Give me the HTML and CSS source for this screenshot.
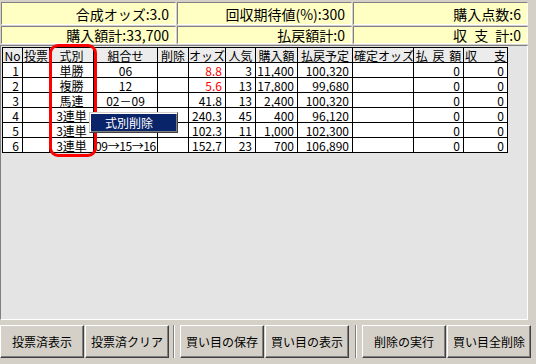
FILE: index.html
```html
<!DOCTYPE html>
<html lang="ja">
<head>
<meta charset="utf-8">
<title>買い目</title>
<link rel="stylesheet" href="styles.css">
</head>
<body>
<div class="summary">
  <div class="panel tall">合成オッズ:3.0</div>
  <div class="panel tall">回収期待値(%):300</div>
  <div class="panel tall">購入点数:6</div>
  <div class="panel">購入額計:33,700</div>
  <div class="panel">払戻額計:0</div>
  <div class="panel spaced">収 支 計:0</div>
</div>
<div class="grid">
  <table>
    <colgroup>
      <col class="w20"><col class="w27"><col class="w44"><col class="w64"><col class="w31"><col class="w37"><col class="w30"><col class="w42"><col class="w55"><col class="w61"><col class="w50"><col class="w44">
    </colgroup>
    <thead>
      <tr>
        <th>No</th><th>投票</th><th>式別</th><th>組合せ</th><th>削除</th><th>オッズ</th><th>人気</th><th>購入額</th><th>払戻予定</th><th class="left">確定オッズ</th><th class="spaced">払 戻 額</th><th><span class="split"><span>収</span><span>支</span></span></th>
      </tr>
    </thead>
    <tbody>
      <tr><td class="r">1</td><td></td><td class="c">単勝</td><td class="c">06</td><td></td><td class="r red">8.8</td><td class="r">3</td><td class="r">11,400</td><td class="r">100,320</td><td></td><td class="r">0</td><td class="r">0</td></tr>
      <tr><td class="r">2</td><td></td><td class="c">複勝</td><td class="c">12</td><td></td><td class="r red">5.6</td><td class="r">13</td><td class="r">17,800</td><td class="r">99,680</td><td></td><td class="r">0</td><td class="r">0</td></tr>
      <tr><td class="r">3</td><td></td><td class="c">馬連</td><td class="c">02－09</td><td></td><td class="r">41.8</td><td class="r">13</td><td class="r">2,400</td><td class="r">100,320</td><td></td><td class="r">0</td><td class="r">0</td></tr>
      <tr><td class="r">4</td><td></td><td class="c">3連単</td><td class="c combo">02→09→15</td><td></td><td class="r">240.3</td><td class="r">45</td><td class="r">400</td><td class="r">96,120</td><td></td><td class="r">0</td><td class="r">0</td></tr>
      <tr><td class="r">5</td><td></td><td class="c">3連単</td><td class="c combo"></td><td></td><td class="r">102.3</td><td class="r">11</td><td class="r">1,000</td><td class="r">102,300</td><td></td><td class="r">0</td><td class="r">0</td></tr>
      <tr><td class="r">6</td><td></td><td class="c">3連単</td><td class="c combo">09→15→16</td><td></td><td class="r">152.7</td><td class="r">23</td><td class="r">700</td><td class="r">106,890</td><td></td><td class="r">0</td><td class="r">0</td></tr>
    </tbody>
  </table>
  <div class="marker"></div>
  <div class="menu"><span class="menu-item">式別削除</span></div>
</div>
<div class="toolbar">
  <button class="btn">投票済表示</button>
  <button class="btn">投票済クリア</button>
  <span class="sep sep1"></span>
  <button class="btn">買い目の保存</button>
  <button class="btn">買い目の表示</button>
  <span class="sep sep2"></span>
  <button class="btn">削除の実行</button>
  <button class="btn">買い目全削除</button>
</div>
</body>
</html>
```

FILE: styles.css
```css
* { box-sizing: border-box; }
html, body { margin: 0; padding: 0; }
body {
  width: 536px;
  height: 364px;
  overflow: hidden;
  background: #d4d0c8;
  font-family: "Noto Sans CJK JP", sans-serif;
  font-size: 12px;
  color: #000;
}

.summary {
  display: grid;
  grid-template-columns: repeat(3, 175px);
  grid-template-rows: 23px 18px;
  gap: 1px;
  padding: 2px 0 0 1px;
}
.panel {
  display: flex;
  align-items: center;
  justify-content: flex-end;
  padding: 0 6px 0 0;
  background: #ffffc4;
  border: 1px solid;
  border-color: #808080 #ffffff #ffffff #808080;
  font-size: 14px;
  line-height: 16px;
  white-space: nowrap;
}
.panel.spaced { word-spacing: 4px; }

.grid {
  position: relative;
  margin-top: 1px;
  width: 528px;
  height: 275px;
  border: 1px solid;
  border-color: #808080 #ffffff #ffffff #808080;
  background: #e4e4e4;
  padding: 1px 0 0 1px;
}
table {
  border-collapse: collapse;
  table-layout: fixed;
  width: 506px;
}
.w20 { width: 20px; } .w27 { width: 27px; } .w44 { width: 44px; } .w64 { width: 64px; }
.w31 { width: 31px; } .w37 { width: 37px; } .w30 { width: 30px; } .w42 { width: 42px; }
.w55 { width: 55px; } .w61 { width: 61px; } .w50 { width: 50px; }
th, td {
  border: 1px solid #000;
  height: 15px;
  padding: 0;
  font-size: 12px;
  line-height: 13px;
  font-weight: normal;
  white-space: nowrap;
  overflow: hidden;
}
th { background: #ececec; text-align: center; }
th.left { text-align: left; padding-left: 1px; }
th.spaced { word-spacing: 2px; }
.split { display: flex; justify-content: space-between; padding: 0 1px 0 1px; }
td { background: #ffffff; }
.r { text-align: right; padding-right: 3px; }
.c { text-align: center; }
.combo { letter-spacing: -0.4px; }
.red { color: #ff0000; }

.marker {
  position: absolute;
  left: 48px;
  top: -2px;
  width: 48px;
  height: 113px;
  border: 3px solid #ff0000;
  border-radius: 9px;
}
.menu {
  position: absolute;
  left: 88px;
  top: 66px;
  width: 89px;
  height: 21px;
  border: 1px solid;
  border-color: #d4d0c8 #404040 #404040 #d4d0c8;
  box-shadow: inset 1px 1px #ffffff, inset -1px -1px #808080;
  padding: 1px;
  background: #d4d0c8;
}
.menu-item {
  display: block;
  height: 17px;
  background: #0a246a;
  color: #ffffff;
  font-size: 12px;
  line-height: 17px;
  padding-left: 14px;
}

.toolbar {
  display: flex;
  align-items: center;
  gap: 1px;
  padding-top: 5px;
}
.btn {
  width: 84px;
  height: 33px;
  margin: 0;
  padding: 0;
  background: #d4d0c8;
  border: 1px solid;
  border-color: #ffffff #404040 #404040 #ffffff;
  box-shadow: inset -1px -1px #808080;
  font-family: "Noto Sans CJK JP", sans-serif;
  font-size: 12px;
  color: #000;
}
.sep {
  width: 2px;
  height: 33px;
  border-left: 1px solid #808080;
  border-right: 1px solid #ffffff;
}
.sep1 { margin: 0 4px 0 3px; }
.sep2 { margin: 0 4px 0 5px; }
```
